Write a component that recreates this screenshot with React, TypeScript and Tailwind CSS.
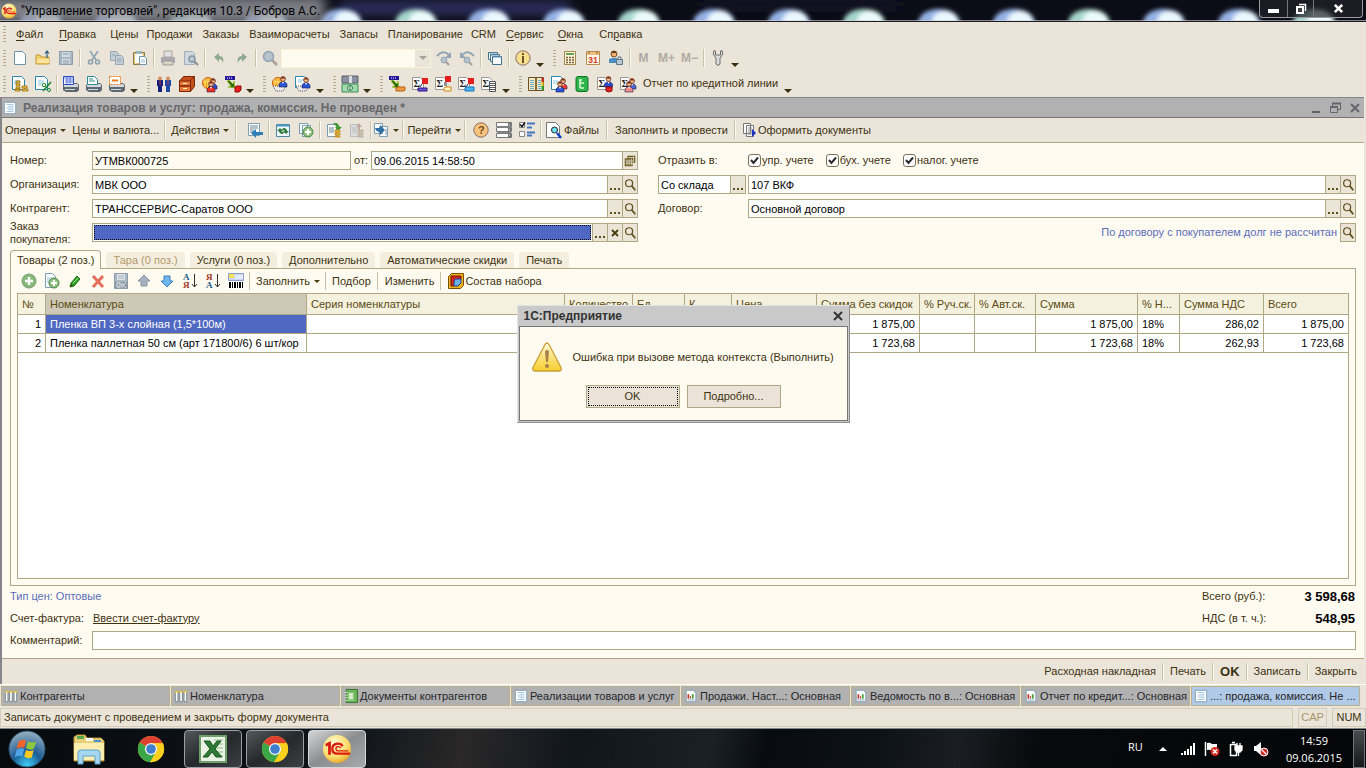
import type { ReactNode } from 'react';

const page = <path d="M2.500 1.500h8l3 3v10h-11z" fill="#fdfeff" stroke="#6f93a8" />;

const Person = ({ x, y, c }: { x: number; y: number; c: string }) => (
  <g>
    <path d={`M${x - 4} ${y + 8}v-3l2-2h4l2 2v3z`} fill={c} stroke="#1d1d4a" strokeWidth=".6" />
    <circle cx={x} cy={y} r="2.400" fill="#f3bf92" stroke="#6b2a12" strokeWidth=".8" />
    <path d={`M${x - 2.4} ${y - 0.6}q2.400 -3.400 4.800 0z`} fill="#7a2a10" />
    <path d={`M${x - 1} ${y + 3}l1 2 1-2z`} fill="#fff" />
  </g>
);

const Sigma = () => (
  <g>
    <path d="M.5 1.500h8l3 3v9h-11z" fill="#fff" stroke="#9a9a9a" />
    <text x="1.500" y="11" fontSize="10" fontWeight="700" fill="#222" fontFamily="Liberation Serif, serif">Σ</text>
  </g>
);

const printerBase = (
  <g>
    <path d="M0 9l3-2h11l2 2v5l-2 2H3l-3-2z" fill="#5f6872" />
    <path d="M1 9l2-1h11l1 1v2H1z" fill="#d3d8dc" />
    <path d="M2 13h10v1H2z" fill="#c8dcd8" />
  </g>
);

const flow = (
  <g>
    <path d="M0 0h10v4H0z" fill="#26169c" />
    <path d="M2 2h1M4 2h1M6 2h1" stroke="#fff" />
    <path d="M4 4l4 4 1-3 1 7-7-1 3-1-4-5z" fill="#2f6a12" stroke="#93c020" strokeWidth=".8" />
  </g>
);

const moneyStack = <path d="M9 8h5v2H9zM9 11h5v2H9zM9 14h5v1H9z" fill="#f2bd2c" stroke="#b47c08" strokeWidth=".7" />;
const globe = (
  <g>
    <circle cx="6" cy="7" r="5.500" fill="#f6a721" stroke="#d4590a" />
    <path d="M3 3v8M6 2v10M1 6h10" stroke="#ffe27a" />
  </g>
);
const basket = <path d="M1 10h13l-3 5H4z" fill="#ececec" stroke="#555" strokeDasharray="1 1" />;
const roundPlus = (
  <g>
    <circle cx="10" cy="10" r="5" fill="#8ec07f" stroke="#4c8a45" />
    <path d="M10 7v6M7 10h6" stroke="#fff" strokeWidth="2" />
  </g>
);

const icons: Record<string, ReactNode> = {
  new: page,
  open: (
    <g>
      <path d="M1 14V5h4l1 2h8v7z" fill="#f3d06c" stroke="#c79a35" />
      <path d="M2 9h12v4H2z" fill="#fbe49b" />
      <path d="M12 8V1M10 3.500l2-2.500 2 2.500" fill="none" stroke="#2d5c7a" strokeWidth="1.200" />
    </g>
  ),
  save: (
    <g>
      <path d="M1.500 1.500h13v13h-13z" fill="#a9b8c3" stroke="#8d9daa" />
      <path d="M4 2h8v5H4zM4 9h8v5H4z" fill="#d3dbe0" />
      <path d="M5 4h6M5 11h6M5 13h6" stroke="#8d9daa" />
    </g>
  ),
  cut: (
    <g fill="none" stroke="#8fa3b1" strokeWidth="1.600">
      <path d="M4 1l6 9M12 1L6 10" />
      <circle cx="4.500" cy="12" r="2" />
      <circle cx="11.500" cy="12" r="2" />
    </g>
  ),
  copy: (
    <g fill="#c3ced6" stroke="#98a9b5">
      <path d="M1.500 1.500h6l2 2v7h-8z" />
      <path d="M6.500 5.500h6l2 2v7h-8z" />
      <path d="M8 9h5M8 11h5M3 5h3" />
    </g>
  ),
  paste: (
    <g>
      <path d="M1.500 2.500h11v12h-11z" fill="#e9c372" stroke="#8b7a4a" />
      <path d="M3 4h8v9H3z" fill="#fff" />
      <path d="M4 1h6v3H4z" fill="#9fb3bf" />
      <path d="M7.500 6.500h5l2 2v6h-7z" fill="#fff" stroke="#6f93a8" />
      <path d="M9 10h4M9 12h4" stroke="#9cc0d8" />
    </g>
  ),
  print: (
    <g>
      <path d="M4 1h8v6H4z" fill="#e0e0e0" stroke="#a5a5a5" />
      <path d="M1 7h14v6H1z" fill="#a7a9ac" />
      <path d="M3 11h10v4H3z" fill="#d9d2c8" stroke="#9b9b9b" />
    </g>
  ),
  preview: (
    <g>
      <path d="M1.500 1.500h8l2 2v11h-10z" fill="#cfd8de" stroke="#a2b0ba" />
      <circle cx="9" cy="9" r="3" fill="#b9c9d3" stroke="#8798a5" strokeWidth="1.500" />
      <path d="M11 11l4 4" stroke="#8e8f92" strokeWidth="2" />
    </g>
  ),
  undo: <path d="M3 7l5-4v3c4 0 5 3 4 7-1-3-2-4-4-4v3z" fill="#8fa890" />,
  redo: <path d="M13 7L8 3v3c-4 0-5 3-4 7 1-3 2-4 4-4v3z" fill="#8fa890" />,
  find: (
    <g>
      <path d="M10 10l5 5" stroke="#a8a09a" strokeWidth="2.500" />
      <circle cx="6.500" cy="6.500" r="5" fill="#b6c3cf" stroke="#93a2b0" strokeWidth="1.500" />
    </g>
  ),
  next: (
    <g>
      <path d="M1 6q6-7 12-1" fill="none" stroke="#94a6b3" strokeWidth="2" />
      <path d="M15 2v6H9z" fill="#94a6b3" />
      <circle cx="8" cy="10" r="3" fill="#b4c1cb" stroke="#94a6b3" />
      <path d="M10 12l3 3" stroke="#a59e98" strokeWidth="2" />
    </g>
  ),
  prev: (
    <g>
      <path d="M15 6Q9-1 3 5" fill="none" stroke="#94a6b3" strokeWidth="2" />
      <path d="M1 2v6h6z" fill="#94a6b3" />
      <circle cx="8" cy="10" r="3" fill="#b4c1cb" stroke="#94a6b3" />
      <path d="M10 12l3 3" stroke="#a59e98" strokeWidth="2" />
    </g>
  ),
  windows: (
    <g fill="#f4fafd" stroke="#47728c">
      <path d="M1.500 2.500h9v7h-9z" />
      <path d="M3.500 4.500h9v7h-9z" />
      <path d="M5.500 6.500h9v8h-9z" />
      <path d="M2 3h8M4 5h8M6 7h8" stroke="#5c94b5" />
    </g>
  ),
  info: (
    <g>
      <circle cx="8" cy="8" r="7.200" fill="#f5d590" stroke="#8b7a6a" />
      <circle cx="8" cy="8" r="5.500" fill="#f9e08c" />
      <path d="M8 3v2M8 6v7" stroke="#68542a" strokeWidth="2" />
    </g>
  ),
  calc: (
    <g>
      <path d="M2.500 1.500h11v13h-11z" fill="#fdf6df" stroke="#a4874c" />
      <path d="M4 3h8v2H4z" fill="#5fa052" />
      <path d="M4 7.500h8M4 10h8M4 12.500h8" stroke="#7a5a28" strokeWidth="1.500" strokeDasharray="2 1" />
    </g>
  ),
  calendar: (
    <g>
      <path d="M1.500 1.500h13v13h-13z" fill="#fff8ea" stroke="#b78c52" />
      <path d="M2 2h12v3H2z" fill="#f0bd7c" />
      <path d="M4 1v3M12 1v3" stroke="#8a6b3a" />
      <text x="3" y="13" fontSize="9" fontWeight="700" fill="#d8401c" fontFamily="Liberation Sans">31</text>
    </g>
  ),
  userlock: (
    <g>
      <circle cx="6" cy="4" r="3" fill="#efb070" stroke="#7a4a22" />
      <path d="M3 3q3-4 6 0z" fill="#5a3518" />
      <path d="M1 13V9l3-1h5v5z" fill="#4a8fc4" />
      <path d="M8.500 9.500h6v5h-6z" fill="#b9c8d2" stroke="#5d7482" />
      <path d="M10 9V7h3v2" fill="none" stroke="#5d7482" />
    </g>
  ),
  wrench: <path d="M4 .5Q2 4 5 7l1 1v6q2 3 4 0V8l1-1q3-3 1-6.500L10.500 1v4h-5V1z" fill="#dcdcdc" stroke="#6c6c6c" />,
  docMoney: (
    <g>
      <path d="M.5.500h9l3 3v10H.5z" fill="#fff" stroke="#2b87ad" />
      <path d="M3 5h5M2 7h4" stroke="#5ab4d2" />
      <path d="M4 5h4v2H4zM4 8h4v2H4zM4 11h4v2H4zM3 13h5v2H3zM10 10h5v2h-5zM10 13h6v2h-6z" fill="#f6cf4c" stroke="#94690a" strokeWidth=".8" />
    </g>
  ),
  docPercent: (
    <g>
      <path d="M.5.500h9l3 3v10H.5z" fill="#fff" stroke="#2b87ad" />
      <path d="M3 5h6M3 7h5M3 9h3" stroke="#8cc8de" />
      <path d="M8 15l8-9" stroke="#17822a" strokeWidth="1.500" />
      <circle cx="9" cy="9" r="1.800" fill="#fff" stroke="#17822a" />
      <circle cx="14" cy="14" r="1.500" fill="#fff" stroke="#17822a" />
    </g>
  ),
  printBlue: (
    <g>
      {printerBase}
      <path d="M.5.500h10v8H.5z" fill="#fff" stroke="#2c4bc4" />
      <path d="M1 2h9M2 4h8M2 6h8M4 1v7M7 1v7" stroke="#5f79df" />
    </g>
  ),
  printTeal: (
    <g>
      {printerBase}
      <path d="M1.500.500h7l3 3v5h-10z" fill="#fff" stroke="#2e8a91" />
      <path d="M3 3h4M3 5h6" stroke="#2e8a91" />
    </g>
  ),
  printOrange: (
    <g>
      {printerBase}
      <path d="M.5.500h11v8H.5z" fill="#fff" stroke="#ee7a1c" strokeDasharray="2 1" />
      <path d="M3 4.500h6" stroke="#ee7a1c" strokeWidth="2" />
    </g>
  ),
  people: (
    <g>
      <path d="M1 4h6v6H6v6H2v-6H1z" fill="#14207c" />
      <path d="M9 4h6v6h-1v6h-4v-6H9z" fill="#1b49a8" />
      <circle cx="4" cy="2.500" r="2" fill="#d58f5f" />
      <circle cx="12" cy="2.500" r="2" fill="#d58f5f" />
      <path d="M4 5v4M12 5v4" stroke="#c33" />
    </g>
  ),
  cabinet: (
    <g stroke="#7c2406">
      <path d="M.5 5l4-4.500h11v10l-4 5H.5z" fill="#c4501c" />
      <path d="M.5 5h11v5H.5zM.5 10h11v5.500H.5z" fill="#e8793a" />
      <path d="M11 5l4-4" />
      <path d="M4 7.500h4M4 12.500h4" stroke="#fff2b0" />
    </g>
  ),
  globePeople: (
    <g>
      {globe}
      <Person x={11} y={5} c="#2b49c9" />
      <Person x={9} y={8} c="#ee3124" />
    </g>
  ),
  flowRed: (
    <g>
      {flow}
      <path d="M10 11l2-1h4v4l-2 2h-4z" fill="#e61e1e" stroke="#8f0c0c" />
    </g>
  ),
  globeBasket: (
    <g>
      {globe}
      {basket}
      <Person x={11} y={3} c="#2b55d9" />
    </g>
  ),
  docBasket: (
    <g>
      <path d="M.5.500h9l2 2v9H.5z" fill="#fff" stroke="#2b87ad" />
      <path d="M3 4h5M3 6h4" stroke="#8cc8de" />
      {basket}
      <Person x={11} y={4} c="#2b55d9" />
    </g>
  ),
  cash: (
    <g>
      <path d="M0 0h16v7H0z" fill="#8c8fa0" stroke="#58606a" />
      <path d="M0 8h16v8H0z" fill="#a3d9ae" stroke="#3d8e57" />
      <circle cx="8" cy="12" r="2.500" fill="#e7f7e8" stroke="#2d7d45" />
      <path d="M7 0h3v7H7z" fill="#d8dbe2" />
      <path d="M8 10v4" stroke="#2d7d45" />
    </g>
  ),
  flowOrange: (
    <g>
      {flow}
      <path d="M7 12l1-1h8v3l-1 1H7z" fill="#f39a46" stroke="#b25c10" />
    </g>
  ),
  sigRedBlue: (
    <g>
      <Sigma />
      <path d="M10 2h6v6h-6z" fill="#e61e1e" />
      <path d="M10 8l-2 3" stroke="#222" />
      <path d="M6 12h9v3H6z" fill="#6a50d8" stroke="#2a1580" />
    </g>
  ),
  sigRedYellow: (
    <g>
      <Sigma />
      <path d="M10 0h6v6h-6z" fill="#e61e1e" />
      <path d="M10 6v4" stroke="#222" />
      <path d="M9 12l1-1h6v4H9z" fill="#fff4c2" stroke="#c98c1c" />
    </g>
  ),
  sigRedCyan: (
    <g>
      <Sigma />
      <path d="M10 2h6v6h-6z" fill="#e61e1e" />
      <path d="M10 8l-2 3" stroke="#222" />
      <path d="M7 12l1-1h8v4H7z" fill="#49b4f0" stroke="#1670bc" />
    </g>
  ),
  sigList: (
    <g>
      <Sigma />
      <path d="M8.500 5.500h6v10h-6z" fill="#fff" stroke="#555" />
      <path d="M9 7.500h5M9 9.500h5M9 11.500h5M9 13.500h5" stroke="#555" />
    </g>
  ),
  ledger: (
    <g>
      <path d="M.5 1.500h15v13H.5z" fill="#efe9c9" stroke="#6a5022" />
      <path d="M7 2h2v12H7z" fill="#8e6c31" />
      <path d="M2 4.500h4M2 6.500h4M2 8.500h4M2 10.500h4M2 12.500h4M10 4.500h3M10 6.500h3M10 8.500h3M10 10.500h3M10 12.500h3" stroke="#6db0c4" />
      <path d="M14.500 2v4" stroke="#d22" strokeWidth="2" />
      <path d="M14.500 6v4" stroke="#e8c820" strokeWidth="2" />
      <path d="M14.500 10v4" stroke="#2a3" strokeWidth="2" />
    </g>
  ),
  docPeople: (
    <g>
      <path d="M.5.500h9l3 3v10H.5z" fill="#fff" stroke="#2b87ad" />
      <path d="M2 5h5M2 7h4" stroke="#8cc8de" />
      <Person x={12} y={5} c="#ee3b2e" />
      <Person x={9} y={8} c="#2b55d9" />
    </g>
  ),
  tree: (
    <g>
      <rect x="2" y=".5" width="12" height="15" rx="2" fill="#2fb64a" stroke="#12702a" />
      <path d="M6 4v8M6 7h4M6 12h4M5 4h3" stroke="#dff7d8" strokeWidth="1.500" fill="none" />
    </g>
  ),
  sigPerson: (
    <g>
      <Sigma />
      <Person x={11.5} y={3} c="#2b49c9" />
      <path d="M9 11h6v4l-3 1-3-1z" fill="#e61e1e" stroke="#8f0c0c" />
    </g>
  ),
  sigPeople: (
    <g>
      <Sigma />
      <Person x={12} y={5} c="#4a68d8" />
      <Person x={9} y={8} c="#f28a8a" />
    </g>
  ),
  form: (
    <g>
      <path d="M1.500 1.500h13v13h-13z" fill="#fcfeff" stroke="#7d9db3" />
      <path d="M4 4h8M6 6h6M4 8h8M6 10h6M4 12h8" stroke="#9ec3dd" />
    </g>
  ),
  formGo: (
    <g>
      <path d="M1.500 1.500h11v12h-11z" fill="#fcfeff" stroke="#7d9db3" />
      <path d="M3 4h8M3 6h8M3 8h4M3 10h3" stroke="#6f8593" />
      <path d="M4 11l5-4v3h7v3H9v3z" fill="#2e7fb5" />
    </g>
  ),
  reread: (
    <g>
      <path d="M1.500 2.500h13v12h-13z" fill="#eff8fb" stroke="#4b87a3" />
      <path d="M2 3.500h12" stroke="#4b9bc0" strokeWidth="2" />
      <path d="M2 9l3-3 3 3H6q1 1 3 1l-1 2q-4 0-4-3zM14 9l-3 3-3-3h2q-1-1-3-1l1-2q4 0 4 3z" fill="#2b7a37" />
    </g>
  ),
  copyAdd: (
    <g>
      <path d="M1.500 1.500h8v10h-8zM4.500 3.500h8v11h-8z" fill="#fcfeff" stroke="#7d9db3" />
      {roundPlus}
    </g>
  ),
  post: (
    <g>
      <path d="M1.500 2.500h9v12h-9z" fill="#fcfeff" stroke="#7d9db3" />
      <path d="M3 6h5M3 8h5M3 10h5" stroke="#6f8593" />
      <path d="M7 1h4l3 4h2l-4 4-3-4h2z" fill="#3f9b32" />
      {moneyStack}
    </g>
  ),
  unpost: (
    <g opacity=".7">
      <path d="M1.500 2.500h9v12h-9z" fill="#d6dadd" stroke="#a3adb4" />
      <path d="M3 6h5M3 8h5M3 10h5" stroke="#a3adb4" />
      <path d="M7 5l3-4 3 4h-2v3H9V5z" fill="#b08c8c" />
      <path d="M9 8h5v2H9zM9 11h5v2H9zM9 14h5v1H9z" fill="#c9c0a2" stroke="#a59e88" />
    </g>
  ),
  goDoc: (
    <g>
      <path d="M1.500 1.500h8v10h-8zM6.500 4.500h8v10h-8z" fill="#fcfeff" stroke="#7d9db3" />
      <path d="M2 6h5V3l5 5-5 5v-3Q3 10 2 6z" fill="#2e6fa5" />
      <path d="M12 8h2M12 10h2M12 12h2" stroke="#7d9db3" />
    </g>
  ),
  help: (
    <g>
      <circle cx="8" cy="8" r="7.200" fill="#f6c47c" stroke="#8a6c62" />
      <text x="5" y="12" fontSize="11" fontWeight="700" fill="#7a4a22" fontFamily="Liberation Sans">?</text>
    </g>
  ),
  list: (
    <g>
      <path d="M.5.500h15v4H.5zM.5 5.500h15v4H.5zM.5 11.500h15v4H.5z" fill="#fff" stroke="#777" />
      <path d="M12 1h3v14h-3z" fill="#6f7276" />
      <path d="M1 5h14M1 10.500h14" stroke="#8b8b8b" />
      <path d="M13 3h1M13 8h1M13 13h1" stroke="#fff" />
    </g>
  ),
  checks: (
    <g>
      <path d="M.5.500h5v5h-5zM.5 9.500h5v5h-5z" fill="#fff" stroke="#888" />
      <path d="M1 2.500l2 2 3-4" stroke="#111" strokeWidth="1.500" fill="none" />
      <path d="M8 1.500h8M8 5.500h5M8 10.500h8M8 13.500h5" stroke="#4675c4" strokeWidth="2" />
    </g>
  ),
  files: (
    <g>
      <path d="M.5.500h9l4 4v11H.5z" fill="#fff" stroke="#777" />
      <circle cx="8.500" cy="8" r="3" fill="#6ee3ef" stroke="#223" />
      <path d="M11 11l4 5" stroke="#1340c0" strokeWidth="2.500" />
    </g>
  ),
  makeDocs: (
    <g>
      <path d="M1.500 1.500h7v10h-7zM4.500 3.500h7v11h-7z" fill="#fff" stroke="#777" />
      <path d="M6 6h4M6 8h4M6 10h4M6 12h4" stroke="#888" />
      <path d="M10 7l4 4-4 4z" fill="#1a2fc0" />
    </g>
  ),
  plus: (
    <g>
      <circle cx="8" cy="8" r="7" fill="#86b878" stroke="#7d9d75" />
      <path d="M8 4v8M4 8h8" stroke="#fff" strokeWidth="2.500" />
    </g>
  ),
  docPlus: (
    <g>
      <path d="M1.500.500h7l3 3v11h-10z" fill="#fcfeff" stroke="#7d9db3" />
      <path d="M3 5h5M3 7h4M3 9h3" stroke="#9ec3dd" />
      {roundPlus}
    </g>
  ),
  pencil: (
    <g>
      <path d="M3 14l1-4 6-7 3 3-6 7z" fill="#35a32c" stroke="#1d6c1a" />
      <path d="M3 14l1-3 2 2z" fill="#4b3a1c" />
      <path d="M6 10l5-5" stroke="#90df7b" />
    </g>
  ),
  cross: <path d="M3 3l10 11M13 3L3 14" stroke="#e36f5c" strokeWidth="3" />,
  saveOk: (
    <g>
      <path d="M1.500.500h13v15h-13z" fill="#a9b8c3" stroke="#8d9daa" />
      <path d="M4 1h8v6H4z" fill="#dce2e6" />
      <path d="M5 3h6M5 5h6" stroke="#a9b8c3" />
      <path d="M2 9h13v6H2z" fill="#8b98a3" />
      <path d="M4 10h3v4H4zM9 10v5M13 10l-3 2 3 3" fill="none" stroke="#e5e9ec" />
    </g>
  ),
  up: <path d="M8 2l6 6h-3v5H5V8H2z" fill="#a4b2bf" stroke="#8795a3" />,
  down: <path d="M8 14l6-6h-3V3H5v5H2z" fill="#6db7ee" stroke="#3a7fb8" />,
  sortAZ: (
    <g fontFamily="Liberation Serif, serif" fontSize="9" fontWeight="700">
      <text x="1" y="7" fill="#235a86">А</text>
      <text x="1" y="15" fill="#a33327">Я</text>
      <path d="M12.500 1v13M10 11l2.500 3 2.500-3" stroke="#333" fill="none" />
    </g>
  ),
  sortZA: (
    <g fontFamily="Liberation Serif, serif" fontSize="9" fontWeight="700">
      <text x="1" y="7" fill="#a33327">Я</text>
      <text x="1" y="15" fill="#235a86">А</text>
      <path d="M12.500 1v13M10 11l2.500 3 2.500-3" stroke="#333" fill="none" />
    </g>
  ),
  barcode: (
    <g>
      <path d="M.5.500h15v7H.5z" fill="#c9d7f5" stroke="#8ea0c9" />
      <path d="M1 1h5v4H1z" fill="#f8e25a" />
      <path d="M7 3h8M7 5h8" stroke="#fff" />
      <path d="M0 8h16v8H0z" fill="#fff" />
      <path d="M1 12h14" stroke="#000" strokeWidth="6" strokeDasharray="2 1 1 1" />
    </g>
  ),
  kit: (
    <g>
      <path d="M.5 3.500l3-3h12v12l-3 3H.5z" fill="#f0b418" stroke="#7b4e06" />
      <path d="M3 3h10v3L6 13H3z" fill="#d42a1c" stroke="#6b0f08" />
      <path d="M7 6h6v4l-3 3H6V9z" fill="#6fb0ea" stroke="#1a3f90" />
    </g>
  ),
  columns: (
    <g>
      <path d="M1.500 2.500h3v12h-3zM6.500 2.500h3v12h-3zM11.500 2.500h3v12h-3z" fill="#fff" stroke="#6f7f8a" />
      <path d="M1 3h4M6 3h4M11 3h4" stroke="#ecc83f" strokeWidth="2" />
    </g>
  ),
  book: (
    <g>
      <path d="M2.500.500h13v15h-13z" fill="#6cb45a" stroke="#2f6c28" />
      <path d="M5 4h6v9H5z" fill="#a9d896" />
      <path d="M6 6h4M6 8h4M6 10h4" stroke="#fff" />
      <path d="M1 4h3M1 7h3M1 10h3M1 13h3" stroke="#dfeedd" />
    </g>
  ),
  report: (
    <g>
      <path d="M2.500 1.500h8l3 3v10h-11z" fill="#fff" stroke="#7d9db3" />
      <path d="M4 6v5h2V6zM7 8v3h1V8z" fill="#c0392b" />
      <path d="M9 6v5h2V6z" fill="#3f9b32" />
      <path d="M4 12.500h8" stroke="#7d9db3" />
    </g>
  ),
  lens: (
    <g fill="none" stroke="#5e4f1c">
      <circle cx="7" cy="6" r="4" strokeWidth="1.400" />
      <path d="M10 9l4 5" strokeWidth="2" />
    </g>
  ),
  dateGrid: (
    <g>
      <path d="M5 2h9v8H5z" fill="#6b5a1e" />
      <path d="M2 5h9v9H2z" fill="#6b5a1e" />
      <path d="M4.500 6v7M7 6v7M9.500 5v8M3 8h9M3 10.500h9M6 4h7M12 3v6" stroke="#e9e4d9" strokeWidth=".9" />
    </g>
  ),
};

const Ico = ({ n, className = 'size-4' }: { n: string; className?: string }) => (
  <svg viewBox="0 0 16 16" className={`${className} shrink-0 overflow-visible`} aria-hidden="true">
    {icons[n]}
  </svg>
);

const Logo1C = ({ className }: { className: string }) => (
  <svg viewBox="0 0 32 32" className={className} aria-hidden="true">
    <defs>
      <radialGradient id="gold" cx=".4" cy=".3" r=".8">
        <stop offset="0" stopColor="#fffbd6" />
        <stop offset=".6" stopColor="#fbdc6a" />
        <stop offset="1" stopColor="#e0981c" />
      </radialGradient>
    </defs>
    <circle cx="16" cy="16" r="15" fill="url(#gold)" />
    <path d="M4 12l4-2v12" fill="none" stroke="#d91d12" strokeWidth="3" />
    <path d="M22 13c-2-4-11-4-11 3 0 4 3 5 6 5h13" fill="none" stroke="#d91d12" strokeWidth="2.500" />
    <path d="M20 15c-2-3-6-1-5 1 0 2 1 2 3 2h10" fill="none" stroke="#d91d12" strokeWidth="1.500" />
  </svg>
);

const Chrome = () => (
  <svg viewBox="0 0 32 32" className="size-7" aria-hidden="true">
    <circle cx="16" cy="16" r="15" fill="#f6c915" />
    <path d="M16 16L3 8.500A15 15 0 0 1 29.500 9.500H16z" fill="#dd4030" />
    <path d="M16 16L3 8.500A15 15 0 0 0 15 31l7-12z" fill="#3ba648" />
    <path d="M16 9.500h13.500A15 15 0 0 1 15 31l7-12z" fill="#f8cf1c" />
    <circle cx="16" cy="16" r="7" fill="#f4f4f4" />
    <circle cx="16" cy="16" r="5.500" fill="#3f7fd0" />
  </svg>
);

const Grip = () => (
  <span className="flex w-3 shrink-0 justify-end pr-[2px]">
    <span className="h-4 w-[3px] bg-[repeating-linear-gradient(180deg,#b3aa8c_0_1px,transparent_1px_3px)]" />
  </span>
);

const Sep = ({ className = 'w-[5px]' }: { className?: string }) => (
  <span className={`flex shrink-0 justify-center ${className}`}>
    <span className="h-[18px] w-px bg-[#c9c2a8]" />
    <span className="h-[18px] w-px bg-[#fdfaf0]" />
  </span>
);

const Caret = () => <span className="ml-1 inline-block border-x-[3px] border-t-[3px] border-x-transparent border-t-[#4a3c12] align-middle" />;

const More = () => (
  <button type="button" aria-label="Еще" className="flex h-5 w-3 shrink-0 items-end justify-center pb-px">
    <span className="border-x-4 border-t-4 border-x-transparent border-t-[#3a3010]" />
  </button>
);

// "|" draws a separator, ":" a grip and "v" a drop-down arrow
const Tools = ({ items }: { items: string[] }) => (
  <>
    {items.map((n, i) => {
      if (n === '|') return <Sep key={i} />;
      if (n === ':') return <Grip key={i} />;
      if (n === 'v') return <More key={i} />;
      return (
        <button key={i} type="button" aria-label={n} className="flex h-5 w-[23px] shrink-0 items-center justify-center">
          <Ico n={n} />
        </button>
      );
    })}
  </>
);

const menu = [
  { first: 'Ф', rest: 'айл', gap: 'mr-4' },
  { first: 'П', rest: 'равка', gap: 'mr-[14px]' },
  { first: '', rest: 'Цены', gap: 'mr-2' },
  { first: '', rest: 'Продажи', gap: 'mr-[10px]' },
  { first: '', rest: 'Заказы', gap: 'mr-[10px]' },
  { first: '', rest: 'Взаиморасчеты', gap: 'mr-[10px]' },
  { first: '', rest: 'Запасы', gap: 'mr-[10px]' },
  { first: '', rest: 'Планирование', gap: 'mr-2' },
  { first: '', rest: 'CRM', gap: 'mr-[10px]' },
  { first: 'С', rest: 'ервис', gap: 'mr-[14px]' },
  { first: 'О', rest: 'кна', gap: 'mr-4' },
];

const FieldButton = ({ label, children }: { label: string; children: ReactNode }) => (
  <button
    type="button"
    aria-label={label}
    className="flex h-[19px] w-4 shrink-0 items-center justify-center border border-[#b0a884] bg-[#ebe5d8] -ml-px text-[#4a3c12]"
  >
    {children}
  </button>
);

const Dots = () => (
  <FieldButton label="Выбрать">
    <span className="mt-2 flex gap-[2px]">
      <i className="size-[2px] bg-[#5e4f1c]" />
      <i className="size-[2px] bg-[#5e4f1c]" />
      <i className="size-[2px] bg-[#5e4f1c]" />
    </span>
  </FieldButton>
);

const Lens = () => (
  <FieldButton label="Открыть">
    <Ico n="lens" className="size-[14px]" />
  </FieldButton>
);

const inputClass = 'h-[19px] min-w-0 border border-[#b0a884] px-[2px] text-black outline-none';

const Check = ({ label }: { label: string }) => (
  <label className="flex items-center gap-px">
    <span className="relative flex">
      <input type="checkbox" defaultChecked className="size-[13px] appearance-none rounded-[3px] border border-[#77705a] bg-white" />
      <svg viewBox="0 0 13 13" className="pointer-events-none absolute inset-0 size-[13px]" aria-hidden="true">
        <path d="M3 6l2.500 3L10 3.500" fill="none" stroke="#2c2c2c" strokeWidth="2" />
      </svg>
    </span>
    {label}
  </label>
);

const tabs = [
  { name: 'Тара (0 поз.)', off: true },
  { name: 'Услуги (0 поз.)' },
  { name: 'Дополнительно' },
  { name: 'Автоматические скидки' },
  { name: 'Печать' },
];

const columns = [
  { name: '№', w: 'w-[28px]' },
  { name: 'Номенклатура', w: 'w-[261px]' },
  { name: 'Серия номенклатуры', w: '' },
  { name: 'Количество', w: 'w-[68px]' },
  { name: 'Ед.', w: 'w-[52px]' },
  { name: 'К.', w: 'w-[47px]' },
  { name: 'Цена', w: 'w-[85px]' },
  { name: 'Сумма без скидок', w: 'w-[103px]' },
  { name: '% Руч.ск.', w: 'w-[55px]' },
  { name: '% Авт.ск.', w: 'w-[61px]' },
  { name: 'Сумма', w: 'w-[102px]' },
  { name: '% Н...', w: 'w-[42px]' },
  { name: 'Сумма НДС', w: 'w-[84px]' },
  { name: 'Всего', w: 'w-[84px]' },
];

const rows = [
  ['1', 'Пленка ВП 3-х слойная (1,5*100м)', '', '', '', '', '', '1 875,00', '', '', '1 875,00', '18%', '286,02', '1 875,00'],
  ['2', 'Пленка паллетная 50 см (арт 171800/6) 6 шт/кор', '', '', '', '', '', '1 723,68', '', '', '1 723,68', '18%', '262,93', '1 723,68'],
];

const windowsBar = [
  { icon: 'columns', name: 'Контрагенты' },
  { icon: 'columns', name: 'Номенклатура' },
  { icon: 'book', name: 'Документы контрагентов' },
  { icon: 'form', name: 'Реализации товаров и услуг' },
  { icon: 'report', name: 'Продажи. Наст...: Основная' },
  { icon: 'report', name: 'Ведомость по в...: Основная' },
  { icon: 'report', name: 'Отчет по кредит...: Основная' },
  { icon: 'form', name: '...: продажа, комиссия. Не ...', active: true },
];

const lights = [40, 115, 190, 265, 340, 415, 488, 563, 638, 713, 788, 863, 938, 1013, 1088, 1163, 1238, 1313];

const TitleBar = () => (
  <header className="relative flex h-[22px] shrink-0 items-center overflow-hidden border-b border-[#1c1c20] bg-[#0b0d16] font-[Roboto,sans-serif] text-xs text-black">
    <svg className="absolute inset-0 h-full w-full" viewBox="0 0 1366 22" preserveAspectRatio="xMinYMin slice" aria-hidden="true">
      <defs>
        <filter id="soft" filterUnits="userSpaceOnUse" x="-20" y="-20" width="1420" height="70">
          <feGaussianBlur stdDeviation="2" />
        </filter>
        <filter id="softer" filterUnits="userSpaceOnUse" x="-40" y="-40" width="1460" height="110">
          <feGaussianBlur stdDeviation="6" />
        </filter>
      </defs>
      <g filter="url(#softer)">
        <path d="M340 2h230v12H340z" fill="#33356a" />
        <path d="M700 0h200v8H700z" fill="#15182c" />
      </g>
      <g filter="url(#soft)">
        {lights.map((x, i) => (
          <g key={x}>
            <ellipse cx={x + 1} cy="23" rx="21" ry="14" fill={i % 3 === 2 ? '#a5d5cc' : '#95b2e6'} />
            <ellipse cx={x + 7} cy="22" rx="13" ry="11" fill="#f4ffff" opacity=".9" />
          </g>
        ))}
      </g>
      <g filter="url(#softer)">
        <path d="M-20 -4h345v28H-20z" fill="#909298" opacity=".85" />
      </g>
      <path d="M0 20.500h1366" stroke="#d5d5dc" opacity=".6" />
    </svg>
    <div className="relative flex flex-1 items-center gap-1">
      <Logo1C className="ml-px size-4" />
      <span>"Управление торговлей", редакция 10.3 / Бобров А.С.</span>
    </div>
    <div className="relative mr-[3px] flex h-[18px] self-start rounded-b border border-t-0 border-[#9a9aa0] bg-[#23242b]/70">
      <button type="button" aria-label="Свернуть" className="flex w-7 items-center justify-center border-r border-[#77777d]">
        <span className="mt-1 h-[4px] w-[11px] bg-white" />
      </button>
      <button type="button" aria-label="Развернуть" className="flex w-[26px] items-center justify-center border-r border-[#77777d]">
        <svg viewBox="0 0 12 12" className="size-3" aria-hidden="true">
          <path d="M4 1.500h6.500V8" fill="none" stroke="#fff" strokeWidth="1.500" />
          <path d="M2 4h6v6H2z" fill="#444" stroke="#fff" strokeWidth="2" />
        </svg>
      </button>
      <button type="button" aria-label="Закрыть программу" className="flex w-[48px] items-center justify-center">
        <svg viewBox="0 0 12 12" className="size-[11px]" aria-hidden="true">
          <path d="M2 2l8 8M10 2l-8 8" stroke="#fff" strokeWidth="2.800" />
        </svg>
      </button>
    </div>
  </header>
);

const Taskbar = () => (
  <footer className="flex h-10 shrink-0 items-center border-t border-[#7d868c] bg-[linear-gradient(100deg,#070a0d_0%,#10151a_26%,#2a2828_34%,#11161d_42%,#1b2027_52%,#080c12_56%,#0d1216_64%,#1a1e22_70%,#07090b_76%,#050607_100%)] font-['Open_Sans',sans-serif] text-[11px] text-white">
    <button type="button" aria-label="Пуск" className="ml-2 mr-[27px]">
      <svg viewBox="0 0 40 40" className="size-[38px]" aria-hidden="true">
        <defs>
          <radialGradient id="orb" cx=".5" cy=".95" r=".9">
            <stop offset="0" stopColor="#3fd0f7" />
            <stop offset=".45" stopColor="#1b5c96" />
            <stop offset="1" stopColor="#8fa9bd" />
          </radialGradient>
        </defs>
        <circle cx="20" cy="20" r="19" fill="url(#orb)" stroke="#254a66" />
        <path d="M11 12q4-3 8-1l-2 8q-4-2-8 1z" fill="#f0642c" />
        <path d="M21 12q4 2 9 0l-3 8q-4 2-8-1z" fill="#8dc63f" />
        <path d="M9 21q4-3 8-1l-2 8q-4-2-8 1z" fill="#4fa4e8" />
        <path d="M19 21q4 2 8 0l-2 8q-4 2-8-1z" fill="#fbc924" />
      </svg>
    </button>
    <button type="button" aria-label="Проводник" className="mr-8">
      <svg viewBox="0 0 32 32" className="size-8" aria-hidden="true">
        <path d="M1 4l3-2h8l2 3h14l3 3v20H1z" fill="#e9cf78" stroke="#b8933a" />
        <path d="M4 3h7v3H4z" fill="#57a64c" />
        <path d="M13 5h7v3h-7z" fill="#fff" />
        <path d="M21 7h7v2h-7z" fill="#4a8fd0" />
        <path d="M1 10h30v17H1z" fill="#fbeeb0" />
        <path d="M5 31V20q0-3 3-3h16q3 0 3 3v11h-5v-8H10v8z" fill="#a5d8f0" stroke="#5a9fc8" />
      </svg>
    </button>
    <button type="button" aria-label="Google Chrome" className="mr-[19px]">
      <Chrome />
    </button>
    <div className="flex h-[38px] gap-1">
      <button type="button" aria-label="Microsoft Excel" className="flex w-[58px] items-center justify-center rounded-sm border border-[#9aa0a4] bg-linear-to-br from-[#55595c] via-[#25292c] to-[#3c4043]">
        <svg viewBox="0 0 28 28" className="size-7" aria-hidden="true">
          <path d="M1 1h26v26H1z" fill="#e9f2e4" stroke="#6f9f6a" strokeWidth="2" />
          <path d="M15 5h9M15 9h9M15 13h9M15 17h9M15 21h9" stroke="#8fbc88" />
          <path d="M5 6h6l3 5 4-5h4l-6 8 7 8h-6l-4-5-4 5H4l7-8z" fill="#2e7a34" stroke="#1c5a22" />
        </svg>
      </button>
      <button type="button" aria-label="Google Chrome, окно" className="flex w-[58px] items-center justify-center rounded-sm border border-[#9aa0a4] bg-linear-to-br from-[#55595c] via-[#25292c] to-[#3c4043]">
        <Chrome />
      </button>
      <button type="button" aria-label="1С:Предприятие" className="flex w-[58px] items-center justify-center rounded-sm border border-[#d5d8da] bg-linear-to-br from-[#d3d5d6] via-[#8b8d8f] to-[#a7a9aa]">
        <Logo1C className="size-[30px]" />
      </button>
    </div>
    <div className="ml-auto flex items-center">
      <span className="mb-1 mr-4">RU</span>
      <button type="button" aria-label="Скрытые значки" className="mr-[14px] border-x-4 border-b-4 border-x-transparent border-b-white" />
      <svg viewBox="0 0 14 12" className="mr-[9px] h-3 w-[14px]" aria-hidden="true">
        <path d="M1 10v2M4 8v4M7 6v6M10 3v9M13 0v12" stroke="#fff" strokeWidth="2" />
      </svg>
      <svg viewBox="0 0 16 16" className="mr-2 size-4" aria-hidden="true">
        <path d="M1.500 1v14" stroke="#fff" strokeWidth="1.500" />
        <path d="M3 2q3-1 5 1h5v7H8q-2-2-5-1z" fill="#fff" />
        <circle cx="11" cy="10.500" r="4.500" fill="#d6281e" />
        <path d="M9 8.500l4 4M13 8.500l-4 4" stroke="#fff" strokeWidth="1.500" />
      </svg>
      <svg viewBox="0 0 16 16" className="mr-[9px] size-4" aria-hidden="true">
        <path d="M3 3.500h6M2.500 3v11.500h6V10M4 1.500h3" fill="none" stroke="#fff" strokeWidth="1.500" />
        <path d="M7 5h7v4l-2 2H9L7 9zM9 2v3M12 2v3M10.500 11v4" fill="#fff" stroke="#fff" strokeWidth="1.300" />
      </svg>
      <svg viewBox="0 0 16 16" className="mr-[17px] size-4" aria-hidden="true">
        <path d="M1 5h2l5-4v13l-5-4H1z" fill="#fff" />
        <circle cx="11" cy="11" r="4" fill="#d6281e" stroke="#fff" />
        <path d="M8.500 8.500l5 5" stroke="#fff" strokeWidth="1.300" />
      </svg>
      <div className="mr-[11px] text-center leading-[17px]">
        <div>14:59</div>
        <div>09.06.2015</div>
      </div>
      <button type="button" aria-label="Свернуть все окна" className="mr-px h-[38px] w-[12px] border border-[#6f757a] bg-linear-to-b from-[#4a4d50] to-[#16181a]" />
    </div>
  </footer>
);

const ErrorDialog = () => (
  <div className="pointer-events-none absolute inset-x-0 top-0 bottom-10 flex items-center justify-center">
    <div role="dialog" aria-labelledby="dlg-title" className="pointer-events-auto w-[333px] border border-[#e2e2e2] border-r-[#8d8d8d] border-b-[#8d8d8d] bg-[#c9c9c9] px-px pb-px">
      <div className="flex h-5 items-center justify-between px-[5px]">
        <h2 id="dlg-title" className="text-xs font-bold text-[#333]">1С:Предприятие</h2>
        <button type="button" aria-label="Закрыть сообщение">
          <svg viewBox="0 0 10 10" className="size-[10px]" aria-hidden="true">
            <path d="M1 1l8 8M9 1L1 9" stroke="#333" strokeWidth="2" />
          </svg>
        </button>
      </div>
      <div className="border border-[#767676] bg-[#fffbf0] px-3 py-3">
        <div className="flex h-9 items-center gap-[11px]">
          <svg viewBox="0 0 30 30" className="size-[30px] shrink-0" aria-hidden="true">
            <defs>
              <linearGradient id="warn" x1="0" y1="0" x2="0" y2="1">
                <stop offset="0" stopColor="#fffbe0" />
                <stop offset=".5" stopColor="#fbe27c" />
                <stop offset="1" stopColor="#f6cf2e" />
              </linearGradient>
            </defs>
            <path d="M13 2.500q2-3 4 0l12 23q1 3-2 3.500H3q-3-.5-2-3.500z" fill="url(#warn)" stroke="#c99e35" strokeWidth="1.300" />
            <path d="M13 9q2-2 4 0l-1 11h-2z" fill="#a9804a" />
            <circle cx="15" cy="24" r="2" fill="#a9804a" />
          </svg>
          <p>Ошибка при вызове метода контекста (Выполнить)</p>
        </div>
        <div className="mt-[10px] flex justify-center gap-[7px]">
          <button type="button" className="h-[23px] w-[94px] border border-[#b0a884] bg-[#ebe3d8] p-px">
            <span className="flex h-full items-center justify-center border border-dotted border-black">OK</span>
          </button>
          <button type="button" className="h-[23px] w-[94px] border border-[#b0a884] bg-[#ebe3d8]">Подробно...</button>
        </div>
      </div>
    </div>
  </div>
);

export default function App() {
  return (
    <div className="relative flex h-screen flex-col overflow-hidden bg-[#eae4d9] font-['Liberation_Sans',Arial,sans-serif] text-[11px] leading-[13px] text-[#3d3210]">
      <TitleBar />

      <nav className="flex h-6 shrink-0 items-center">
        <span className="-ml-1 mr-2 flex"><Grip /></span>
        {menu.map((m) => (
          <button key={m.first + m.rest} type="button" className={m.gap}>
            {m.first && <u className="underline-offset-2">{m.first}</u>}
            {m.rest}
          </button>
        ))}
        <button type="button">Сп<u className="underline-offset-2">р</u>авка</button>
      </nav>

      <div className="flex h-6 shrink-0 items-center">
        <span className="-ml-1 flex"><Grip /></span>
        <Tools items={['new', 'open', 'save', '|', 'cut', 'copy', 'paste', '|', 'print', 'preview', '|', 'undo', 'redo', '|', 'find']} />
        <div className="mr-px flex w-[150px] border border-[#fbf3d6]">
          <input aria-label="Поиск" className="h-[17px] min-w-0 flex-1 bg-[#fffbf0] outline-none" />
          <button type="button" aria-label="История поиска" className="flex w-[15px] items-center justify-center">
            <span className="border-x-4 border-t-4 border-x-transparent border-t-[#a8a396]" />
          </button>
        </div>
        <Tools items={['next', 'prev', '|', 'windows', '|', 'info', 'v', ':', 'calc', 'calendar', 'userlock', '|']} />
        {['M', 'M+', 'M−'].map((m) => (
          <button key={m} type="button" className="w-[23px] text-center text-xs font-bold text-[#b0aba2]">{m}</button>
        ))}
        <Tools items={['|', 'wrench', 'v']} />
      </div>

      <div className="flex h-[27px] shrink-0 items-center">
        <span className="-ml-1 flex"><Grip /></span>
        <Tools
          items={[
            'docMoney', 'docPercent', '|', 'printBlue', 'printTeal', 'printOrange', 'v', ':',
            'people', 'cabinet', 'globePeople', 'flowRed', 'v', ':', 'globeBasket', 'docBasket', 'v', ':', 'cash', 'v', ':',
            'flowOrange', 'sigRedBlue', 'sigRedYellow', 'sigRedCyan', 'sigList', 'v', ':',
            'ledger', 'docPeople', 'tree', 'sigPerson', 'sigPeople',
          ]}
        />
        <button type="button" className="mx-1">Отчет по кредитной линии</button>
        <More />
      </div>

      <main className="mr-[2px] flex min-h-0 flex-1 flex-col border-l-2 border-t border-[#85858a]">
        <div className="flex h-5 shrink-0 items-center border-b border-[#77737a] bg-[#b1b1b1] text-[#66666a]">
          <Ico n="form" className="ml-[1px] size-[14px]" />
          <h1 className="ml-[6px] flex-1 text-xs font-bold">Реализация товаров и услуг: продажа, комиссия. Не проведен *</h1>
          <div className="mr-1 flex items-center gap-[9px]">
            <button type="button" aria-label="Свернуть окно" className="mt-2 h-[2px] w-2 bg-[#66666a]" />
            <button type="button" aria-label="Восстановить окно">
              <svg viewBox="0 0 12 12" className="size-3" fill="none" stroke="#66666a" aria-hidden="true">
                <path d="M3.500 4V1.500h8v6H9" />
                <path d="M3 1.500h9M1 5h7.500" strokeWidth="2" />
                <path d="M1.500 4.500h7v6h-7z" />
              </svg>
            </button>
            <button type="button" aria-label="Закрыть окно">
              <svg viewBox="0 0 10 10" className="size-[10px]" aria-hidden="true">
                <path d="M1 1l8 8M9 1L1 9" stroke="#66666a" strokeWidth="2" />
              </svg>
            </button>
          </div>
        </div>

        <div className="flex h-[25px] shrink-0 items-center border-b border-[#b0a884] pl-[3px]">
          <button type="button">Операция<Caret /></button>
          <button type="button" className="ml-[6px]">Цены и валюта...</button>
          <Sep className="w-3" />
          <button type="button">Действия<Caret /></button>
          <Sep className="w-[14px]" />
          <Tools items={['formGo', '|', 'reread', 'copyAdd', '|', 'post', 'unpost', '|']} />
          <button type="button" className="flex items-center" aria-label="Ввести на основании">
            <Ico n="goDoc" />
            <Caret />
          </button>
          <Sep className="w-2" />
          <button type="button">Перейти<Caret /></button>
          <Sep className="w-2" />
          <Tools items={['help', 'list', 'checks', '|']} />
          <button type="button" className="ml-[3px] flex items-center gap-[2px]"><Ico n="files" />Файлы</button>
          <Sep className="w-4" />
          <button type="button">Заполнить и провести</button>
          <Sep className="w-[14px]" />
          <button type="button" className="flex items-center"><Ico n="makeDocs" />Оформить документы</button>
        </div>

        <div className="flex min-h-0 flex-1 flex-col bg-[#fffbf0] px-2 pt-2">
          <div className="flex shrink-0 gap-5">
            <div className="grid w-[628px] shrink-0 grid-cols-[82px_1fr] items-center gap-y-[5px]">
              <label htmlFor="num">Номер:</label>
              <div className="flex items-center">
                <input id="num" defaultValue="УТМВК000725" className={`${inputClass} w-[259px] bg-[#fffbf0]`} />
                <label htmlFor="date" className="w-5 pl-[3px]">от:</label>
                <input id="date" defaultValue="09.06.2015 14:58:50" className={`${inputClass} flex-1 bg-white`} />
                <FieldButton label="Календарь"><Ico n="dateGrid" className="size-[14px]" /></FieldButton>
              </div>
              <label htmlFor="org">Организация:</label>
              <div className="flex">
                <input id="org" defaultValue="МВК ООО" className={`${inputClass} flex-1 bg-white`} />
                <Dots />
                <Lens />
              </div>
              <label htmlFor="agent">Контрагент:</label>
              <div className="flex">
                <input id="agent" defaultValue="ТРАНССЕРВИС-Саратов ООО" className={`${inputClass} flex-1 bg-white`} />
                <Dots />
                <Lens />
              </div>
              <label htmlFor="order" className="-my-1">Заказ<br />покупателя:</label>
              <div className="flex">
                <div className="flex h-[19px] flex-1 border border-[#b0a884] bg-white p-px">
                  <input id="order" className="min-w-0 flex-1 border border-dotted border-black bg-[#4f68c1] outline-none" />
                </div>
                <Dots />
                <FieldButton label="Очистить">
                  <svg viewBox="0 0 8 8" className="size-2" aria-hidden="true">
                    <path d="M1 1l6 6M7 1L1 7" stroke="#4a3c12" strokeWidth="1.800" />
                  </svg>
                </FieldButton>
                <Lens />
              </div>
            </div>

            <div className="flex min-w-0 flex-1 flex-col gap-[5px]">
              <div className="flex h-[19px] items-center">
                <span className="w-[90px]">Отразить в:</span>
                <div className="flex gap-3">
                  <Check label="упр. учете" />
                  <Check label="бух. учете" />
                  <Check label="налог. учете" />
                </div>
              </div>
              <div className="flex">
                <input aria-label="Вид склада" defaultValue="Со склада" className={`${inputClass} w-[73px] bg-white`} />
                <Dots />
                <input aria-label="Склад" defaultValue="107 ВКФ" className={`${inputClass} ml-[2px] flex-1 bg-white`} />
                <Dots />
                <Lens />
              </div>
              <div className="flex items-center">
                <label htmlFor="contract" className="w-[90px]">Договор:</label>
                <input id="contract" defaultValue="Основной договор" className={`${inputClass} flex-1 bg-white`} />
                <Dots />
                <Lens />
              </div>
              <div className="flex items-center justify-end gap-1 text-[#5a6cba]">
                По договору с покупателем долг не рассчитан
                <Lens />
              </div>
            </div>
          </div>

          <div role="tablist" className="mt-[7px] flex h-[19px] shrink-0 items-end gap-[5px]">
            <button type="button" role="tab" aria-selected="true" className="relative -mb-px h-[19px] rounded-t-sm border border-b-0 border-[#b0a884] bg-[#fffbf0] px-[6px] pt-px">
              Товары (2 поз.)
            </button>
            {tabs.map((t) => (
              <button
                key={t.name}
                type="button"
                role="tab"
                aria-selected="false"
                className={`h-4 rounded-t-sm bg-[#f4eedf] px-[7px] ${t.off ? 'text-[#b39a6c]' : ''}`}
              >
                {t.name}
              </button>
            ))}
          </div>

          <section className="flex min-h-0 flex-1 flex-col border border-[#b0a884] px-[6px] pb-[6px]">
            <div className="flex h-[24px] shrink-0 items-center">
              <Tools items={['plus', 'docPlus', 'pencil', 'cross', 'saveOk', 'up', 'down', 'sortAZ', 'sortZA', 'barcode', '|']} />
              <button type="button" className="ml-1">Заполнить<Caret /></button>
              <Sep className="w-3" />
              <button type="button">Подбор</button>
              <Sep className="w-[14px]" />
              <button type="button">Изменить</button>
              <Sep className="w-[14px]" />
              <button type="button" className="flex items-center gap-px"><Ico n="kit" />Состав набора</button>
            </div>
            <div className="min-h-0 flex-1 overflow-hidden border border-[#b0a884] bg-white">
              <table className="w-full table-fixed border-separate border-spacing-0">
                <thead>
                  <tr className="h-[21px] bg-[#f4f1de]">
                    {columns.map((c, i) => (
                      <th
                        key={c.name}
                        className={`${c.w} overflow-hidden whitespace-nowrap border-b border-[#b0a884] pl-1 text-left font-normal text-[#5a4a14] ${i < 13 ? 'border-r' : ''} ${i === 1 ? 'bg-[#cdc9b6] text-[#3d3210]' : ''}`}
                      >
                        {c.name}
                      </th>
                    ))}
                  </tr>
                </thead>
                <tbody>
                  {rows.map((r, ri) => (
                    <tr key={r[0]} className="h-[19px] text-black">
                      {r.map((cell, i) => (
                        <td
                          key={i}
                          className={`truncate border-b border-[#b0a884] px-1 ${i < 13 ? 'border-r' : ''} ${i === 1 || i === 11 ? 'text-left' : 'text-right'} ${ri === 0 && i === 1 ? 'bg-[#4f68c1] text-white' : ''}`}
                        >
                          {cell}
                        </td>
                      ))}
                    </tr>
                  ))}
                </tbody>
              </table>
            </div>
          </section>

          <div className="flex shrink-0 flex-col pb-2">
            <div className="flex h-5 items-center">
              <span className="flex-1 text-[#5a6cba]">Тип цен: Оптовые</span>
              <span className="w-[67px]">Всего (руб.):</span>
              <b className="w-[87px] pr-px text-right text-[13px] text-black">3 598,68</b>
            </div>
            <div className="flex h-6 items-center">
              <span className="w-[83px]">Счет-фактура:</span>
              <a href="#invoice" className="underline">Ввести счет-фактуру</a>
              <span className="ml-auto w-[67px] whitespace-nowrap">НДС (в т. ч.):</span>
              <b className="w-[87px] pr-px text-right text-[13px] text-black">548,95</b>
            </div>
            <div className="mt-px flex items-center">
              <label htmlFor="comment" className="w-[82px]">Комментарий:</label>
              <input id="comment" className={`${inputClass} flex-1 bg-white`} />
            </div>
          </div>
        </div>

        <div className="flex h-[26px] shrink-0 items-center justify-end border-t border-[#b0a884] pr-[7px]">
          <button type="button">Расходная накладная</button>
          <Sep className="w-[14px]" />
          <button type="button">Печать</button>
          <Sep className="w-[14px]" />
          <button type="button" className="text-[13px] font-bold">OK</button>
          <Sep className="w-[14px]" />
          <button type="button">Записать</button>
          <Sep className="w-[14px]" />
          <button type="button">Закрыть</button>
        </div>
      </main>

      <div className="flex h-[23px] shrink-0 items-center gap-px border-t border-white pl-px pr-[6px] text-[#26262a]">
        {windowsBar.map((w) => (
          <button
            key={w.name}
            type="button"
            className={`flex h-5 min-w-0 flex-1 items-center gap-[2px] whitespace-nowrap border border-[#b9b08c] pl-[2px] ${w.active ? 'bg-[#b0c9e6]' : 'bg-[#b1b1b1]'}`}
          >
            <Ico n={w.icon} className="size-[14px]" />
            {w.name}
          </button>
        ))}
      </div>

      <div className="flex h-[21px] shrink-0 gap-[5px] pb-px pt-px">
        <div className="flex flex-1 items-center border border-[#d3ccba] pl-[3px]">Записать документ с проведением и закрыть форму документа</div>
        <div className="flex w-[29px] items-center justify-center border border-[#d3ccba] text-[#a8966a]">CAP</div>
        <div className="flex w-[34px] items-center justify-center border border-[#d3ccba]">NUM</div>
      </div>

      <Taskbar />
      <ErrorDialog />
    </div>
  );
}
